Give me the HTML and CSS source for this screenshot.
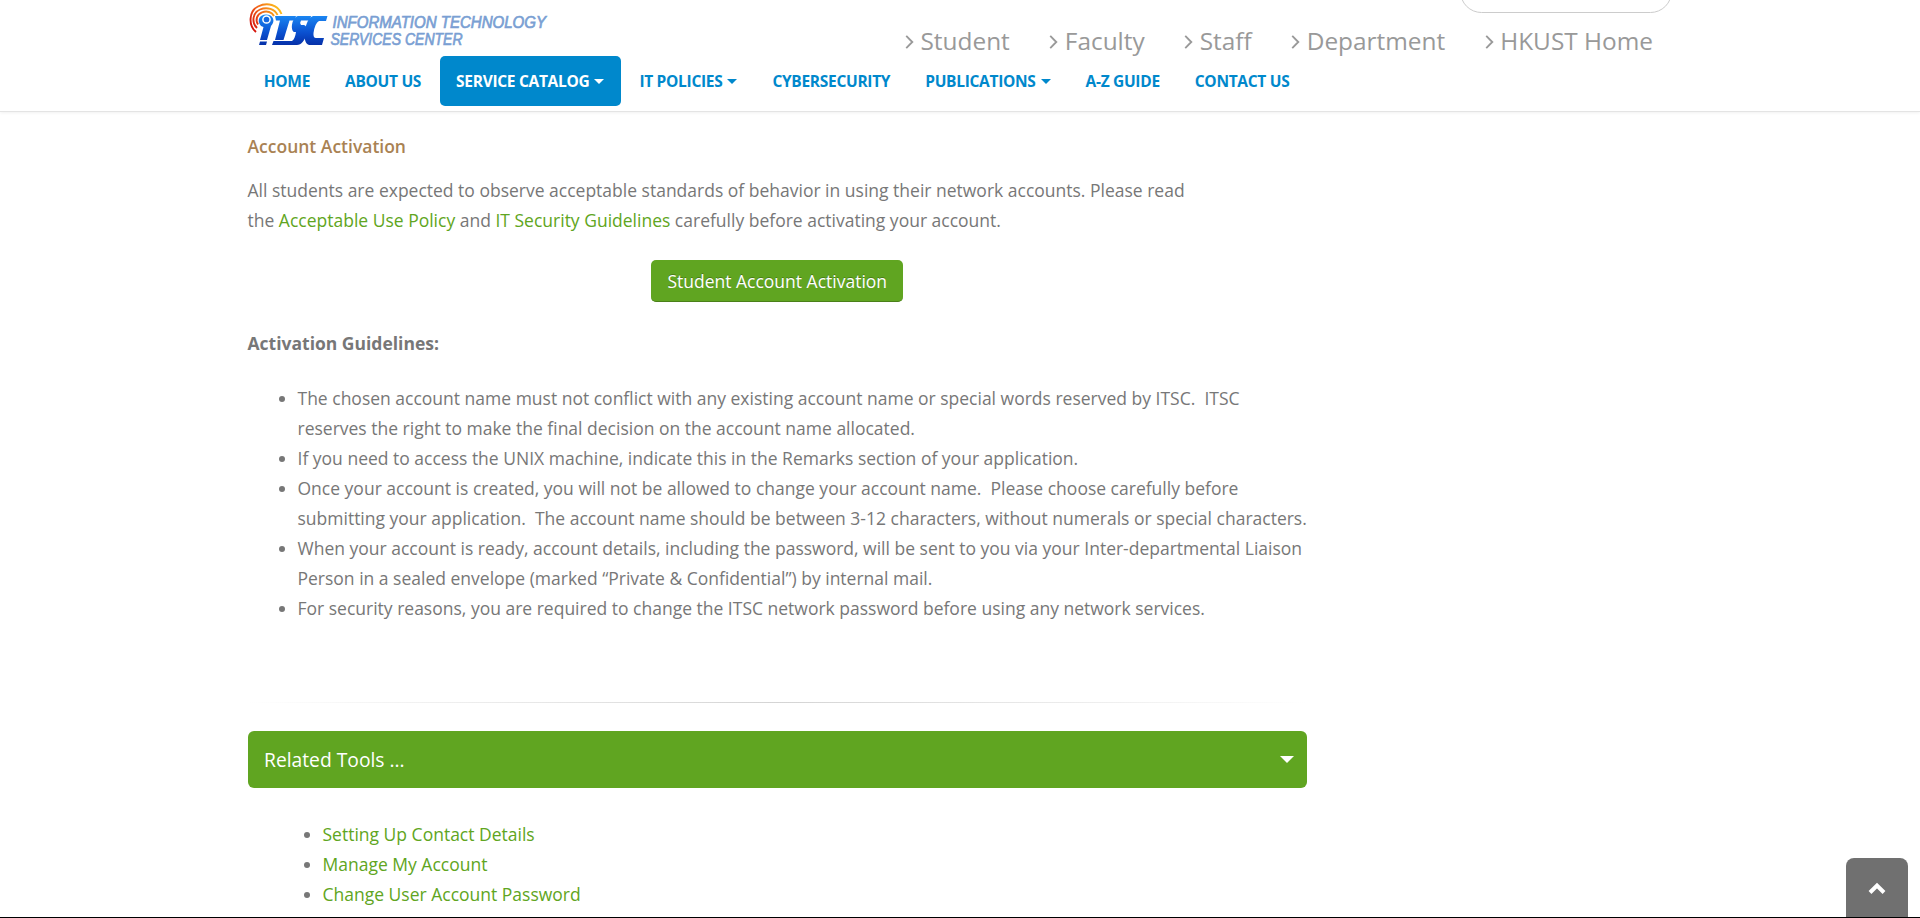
FILE: index.html
```html
<!DOCTYPE html>
<html lang="en">
<head>
<meta charset="utf-8">
<title>Account Activation - ITSC</title>
<link rel="stylesheet" href="styles.css">
</head>
<body>
<header class="header">
  <div class="brand-row">
    <svg class="logo" width="330" height="50" viewBox="8 0 330 50" role="img" aria-label="ITSC">
      <defs>
        <linearGradient id="blue" gradientUnits="userSpaceOnUse" x1="0" y1="14" x2="0" y2="45"><stop offset="0" stop-color="#1c8cf6"/><stop offset=".6" stop-color="#0a50d0"/><stop offset="1" stop-color="#0630a8"/></linearGradient>
        <linearGradient id="fire" gradientUnits="userSpaceOnUse" x1="11" y1="26" x2="40" y2="8"><stop offset="0" stop-color="#d4120c"/><stop offset=".45" stop-color="#f2641a"/><stop offset="1" stop-color="#fdc21c"/></linearGradient>
      </defs>
      <g fill="none" stroke="url(#fire)" stroke-width="1.900">
        <path d="M16 32C8 25 9 11 18 6.500C27 2 38 4.500 41.500 14"/>
        <path d="M17 28C11 22 13 12.500 20 9.500C27 6.500 35 9 37.500 15"/>
        <path d="M18 24.500C15 20 17 14 22 12.300C27 10.500 32 12 34 16"/>
      </g>
      <g fill="url(#blue)">
        <path d="M21 26C16 20 20 14.500 26 14.500C33 14.500 36 21 31 26L27 40H20L23.500 27Z"/>
        <path d="M20 41.500H27L26 45H19Z"/>
        <path d="M35 16H56L54.500 20.500H49.500L43.500 40H35L40 20.500H36Z"/>
        <path d="M58 16H71L70 20.500H61Q59.500 22.500 61 25H64C70 26 66 45 57 45H32L33.500 41H52Q55 39 56 32H54C50 30 52 17 58 16Z"/>
        <path d="M73 16H87.500L86 21H79Q75 23 73.500 33Q73 38 76 38H84L82 45H69C61 43 65 18 73 16Z"/>
      </g>
      <circle cx="26.500" cy="19.500" r="3.600" fill="#1668e0" stroke="#fff" stroke-width="1.500"/>
      <text class="logo-text" x="92.500" y="28" textLength="213.500" lengthAdjust="spacingAndGlyphs">INFORMATION TECHNOLOGY</text>
      <text class="logo-text" x="90.500" y="45" textLength="132" lengthAdjust="spacingAndGlyphs">SERVICES CENTER</text>
    </svg>
    <ul class="audience">
      <li><svg class="angle" viewBox="0 0 9 15"><path d="M1 1L7.500 7.500L1 14"/></svg>Student</li>
      <li><svg class="angle" viewBox="0 0 9 15"><path d="M1 1L7.500 7.500L1 14"/></svg>Faculty</li>
      <li><svg class="angle" viewBox="0 0 9 15"><path d="M1 1L7.500 7.500L1 14"/></svg>Staff</li>
      <li><svg class="angle" viewBox="0 0 9 15"><path d="M1 1L7.500 7.500L1 14"/></svg>Department</li>
      <li><svg class="angle" viewBox="0 0 9 15"><path d="M1 1L7.500 7.500L1 14"/></svg>HKUST Home</li>
    </ul>
    <div class="search"></div>
  </div>
  <nav class="nav">
    <a>HOME</a>
    <a>ABOUT US</a>
    <a class="active">SERVICE CATALOG<i class="caret"></i></a>
    <a>IT POLICIES<i class="caret"></i></a>
    <a>CYBERSECURITY</a>
    <a>PUBLICATIONS<i class="caret"></i></a>
    <a>A-Z GUIDE</a>
    <a>CONTACT US</a>
  </nav>
</header>
<main class="content">
  <h5 class="title">Account Activation</h5>
  <p class="intro">All students are expected to observe acceptable standards of behavior in using their network accounts. Please read<br>the <a>Acceptable Use Policy</a> and <a>IT Security Guidelines</a> carefully before activating your account.</p>
  <div class="button-row"><a class="button">Student Account Activation</a></div>
  <p class="subtitle">Activation Guidelines:</p>
  <ul class="guidelines">
    <li>The chosen account name must not conflict with any existing account name or special words reserved by ITSC.&nbsp; ITSC<br>reserves the right to make the final decision on the account name allocated.</li>
    <li>If you need to access the UNIX machine, indicate this in the Remarks section of your application.</li>
    <li>Once your account is created, you will not be allowed to change your account name.&nbsp; Please choose carefully before<br>submitting your application.&nbsp; The account name should be between 3-12 characters, without numerals or special characters.</li>
    <li>When your account is ready, account details, including the password, will be sent to you via your Inter-departmental Liaison<br>Person in a sealed envelope (marked “Private &amp; Confidential”) by internal mail.</li>
    <li>For security reasons, you are required to change the ITSC network password before using any network services.</li>
  </ul>
  <div class="divider"></div>
  <div class="panel">Related Tools ...<i class="panel-caret"></i></div>
  <ul class="tools">
    <li><a>Setting Up Contact Details</a></li>
    <li><a>Manage My Account</a></li>
    <li><a>Change User Account Password</a></li>
  </ul>
</main>
<div class="to-top"><svg width="18" height="13" viewBox="0 0 18 13"><path d="M2 10.500L9 3.500L16 10.500"/></svg></div>
<div class="bottom-line"></div>
</body>
</html>
```
FILE: styles.css
```css
* { box-sizing: border-box; }
html, body { height: 100%; overflow: hidden; }
body { margin: 0; background: #fff; color: #777; font: 17.5px/30px "Open Sans", sans-serif; }
ul, p, h5 { margin: 0; padding: 0; }
.header { height: 112px; border-bottom: 1px solid #e4e4e4; box-shadow: 0 1px 3px rgba(0,0,0,.06); padding: 0 247.500px; }
.brand-row { display: flex; height: 56px; position: relative; }
.logo { flex: none; }
.logo-text { font: italic 400 16px "Liberation Sans", Arial, sans-serif; fill: #7a9fd3; stroke: #7a9fd3; stroke-width: .7px; }
.audience { list-style: none; display: flex; margin: 24px 0 0 327.500px; font-size: 24.400px; line-height: 36px; color: #999; white-space: nowrap; }
.audience li { display: flex; align-items: center; margin-right: 39.500px; height: 34px; }
.angle { width: 9px; height: 14px; margin: 2px 6.500px 0 0; fill: none; stroke: #999; stroke-width: 2; }
.search { position: absolute; left: 1212.500px; top: -30px; width: 212px; height: 43px; border: 1px solid #ccc; border-radius: 22px; }
.nav { display: flex; gap: 2.500px; font-size: 15.500px; letter-spacing: -.3px; font-weight: 700; line-height: 25px; color: #08c; }
.nav a { display: flex; align-items: center; height: 50px; padding: 0 16.250px; border-radius: 5px; white-space: nowrap; }
.nav .active { background: #08c; color: #fff; }
.caret { border: 5px solid transparent; border-top-color: currentColor; border-bottom: 0; margin: 1px 0 0 5px; }
.content { width: 1059.500px; margin-left: 247.500px; white-space: nowrap; }
.title { padding-top: 19px; font-size: 17.500px; line-height: 30px; font-weight: 600; color: #a98253; }
.intro { margin-top: 14px; }
a { color: inherit; }
.intro a, .tools a { color: #60a521; }
.button-row { text-align: center; margin-top: 25px; height: 42px; display: flex; justify-content: center; }
.button { width: 252px; height: 42px; line-height: 42px; color: #fff; background: #60a521; border-radius: 5px; border-bottom: 1px solid #4a8019; text-shadow: 0 -1px 0 rgba(0,0,0,.25); }
.subtitle { margin-top: 26px; font-weight: 700; }
.guidelines { margin-top: 25px; padding-left: 50px; }
.divider { height: 1px; margin-top: 79px; background: linear-gradient(to right, transparent, #d4d4d4, transparent); }
.panel { display: flex; align-items: center; justify-content: space-between; height: 57px; margin-top: 28px; padding: 0 13px 0 16.500px; font-size: 19.250px; color: #fff; background: #60a521; border-radius: 6px; }
.panel-caret { border: 7.500px solid transparent; border-top-color: #fff; border-bottom: 0; }
.tools { margin-top: 31px; padding-left: 75px; }
.to-top { position: absolute; left: 1846px; top: 858px; width: 62px; height: 60px; background: #707070; border-radius: 8px 8px 0 0; display: flex; justify-content: center; padding-top: 24px; }
.to-top path { fill: none; stroke: #fff; stroke-width: 4; }
.bottom-line { position: absolute; left: 0; right: 0; bottom: 0; height: 1px; background: #000; }
```
